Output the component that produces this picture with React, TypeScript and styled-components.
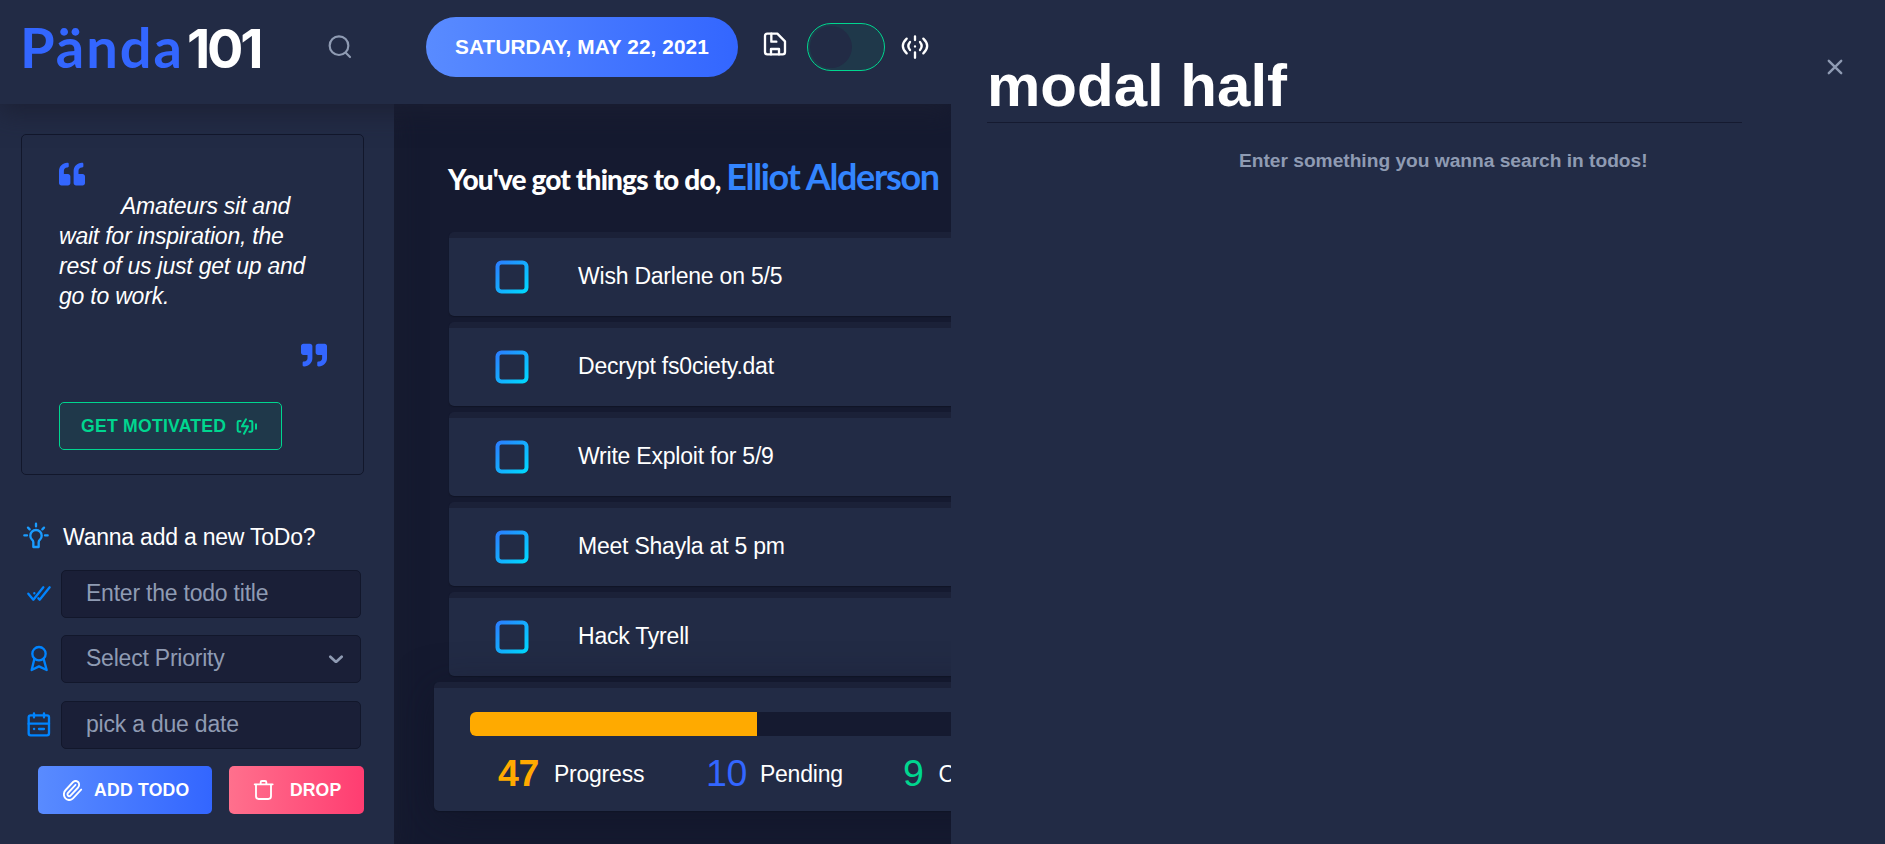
import React from "react";
import styled, { createGlobalStyle } from "styled-components";
import { FaQuoteLeft, FaQuoteRight } from "react-icons/fa";

const c = {
  panel: "#222b45",
  deep: "#151a30",
  field: "#1a1f37",
  line: "#12172b",
  hint: "#8f9bb3",
  primary: "#3366ff",
  primaryLight: "#598bff",
  info: "#0084ff",
  success: "#00d68f",
  warning: "#ffaa00",
};

const Global = createGlobalStyle`
  *, *::before, *::after { box-sizing: border-box; }
  html, body { margin: 0; padding: 0; background: ${c.panel}; overflow: hidden; }
  body {
    font-family: "Liberation Sans", Arial, sans-serif;
    font-size: 23px;
    letter-spacing: -0.22px;
    color: #fff;
  }
  p, h1, h2 { margin: 0; font-weight: 400; }
`;

const Screen = styled.div`
  display: flex;
  width: 1885px;
  height: 844px;
  overflow: hidden;
`;

const Workspace = styled.div`
  display: flex;
  flex-direction: column;
  flex: none;
  width: 951px;
  overflow: hidden;
  background: ${c.deep};
`;

const Header = styled.header`
  position: relative;
  z-index: 2;
  display: flex;
  align-items: flex-start;
  flex: none;
  height: 104px;
  background: ${c.panel};
  box-shadow: 0 8px 24px rgba(27, 31, 49, 0.85);
`;

const Logo = styled.h1`
  display: flex;
  align-items: baseline;
  width: 305px;
  padding: 13px 0 0 20px;
  font-family: Lato, sans-serif;
  font-size: 56px;
  line-height: 67px;
  font-weight: 700;
  letter-spacing: 2px;
  color: ${c.primary};
  white-space: nowrap;
`;

const LogoNumber = styled.span`
  margin-left: 3px;
  color: #fff;
  font-family: Inter, sans-serif;
  font-size: 54px;
  font-weight: 700;
  letter-spacing: -3.2px;
`;

const Svg = styled.svg<{ $color?: string; $stroke?: number }>`
  display: block;
  flex: none;
  fill: none;
  stroke: ${(p) => p.$color ?? "#fff"};
  stroke-width: ${(p) => p.$stroke ?? 7};
  stroke-linecap: round;
  stroke-linejoin: round;
`;

type IconProps = {
  box: [number, number, number, number];
  color?: string;
  stroke?: number;
  children: React.ReactNode;
};

/* Icon paths are drawn on a grid three units to the pixel. */
const Icon = ({ box, color, stroke, children }: IconProps) => (
  <Svg
    width={box[2] / 3}
    height={box[3] / 3}
    viewBox={box.join(" ")}
    $color={color}
    $stroke={stroke}
    aria-hidden
  >
    {children}
  </Svg>
);

const HeaderSlot = styled.span<{ $left: number; $top: number }>`
  margin-left: ${(p) => p.$left}px;
  margin-top: ${(p) => p.$top}px;
`;

const DatePill = styled.div`
  width: 312px;
  height: 60px;
  margin: 17px 0 0 73px;
  border-radius: 30px;
  background: linear-gradient(90deg, ${c.primaryLight}, ${c.primary});
  font-size: 20.8px;
  line-height: 60px;
  font-weight: 700;
  letter-spacing: 0.08px;
  text-align: center;
  white-space: nowrap;
`;

const Toggle = styled.div`
  display: flex;
  align-items: center;
  width: 78px;
  height: 48px;
  margin: 23px 0 0 20px;
  padding-left: 2px;
  border: 1px solid ${c.success};
  border-radius: 24px;
  background: rgba(0, 214, 143, 0.08);
`;

const Knob = styled.span`
  width: 42px;
  height: 42px;
  border-radius: 50%;
  background: ${c.panel};
`;

const Body = styled.div`
  display: flex;
  flex: 1;
  min-height: 0;
`;

const Sidebar = styled.aside`
  position: relative;
  z-index: 1;
  flex: none;
  width: 394px;
  padding: 30px 30px 0 21px;
  background: ${c.panel};
  box-shadow: 0 8px 24px rgba(27, 31, 49, 0.7);
`;

const QuoteCard = styled.section`
  display: flex;
  flex-direction: column;
  align-items: flex-start;
  width: 343px;
  height: 341px;
  padding: 26px 36px 0 37px;
  border: 1px solid ${c.line};
  border-radius: 5px;
`;

const QuoteMark = styled.span<{ $end?: boolean }>`
  display: block;
  height: 26px;
  align-self: ${(p) => (p.$end ? "flex-end" : "flex-start")};
  margin-top: ${(p) => (p.$end ? 31 : 0)}px;
  color: ${c.primary};
  svg {
    display: block;
    width: 26px;
    height: 26px;
  }
`;

const Quote = styled.p`
  width: 262px;
  margin-top: 4px;
  font-style: italic;
  line-height: 30px;
  text-indent: 62px;
`;

const Button = styled.button<{ $kind: "outline" | "primary" | "danger" }>`
  display: flex;
  align-items: center;
  height: 48px;
  padding: 0;
  border: ${(p) => (p.$kind === "outline" ? `1px solid ${c.success}` : "0")};
  border-radius: 5px;
  background: ${(p) =>
    p.$kind === "outline"
      ? "rgba(0, 214, 143, 0.08)"
      : p.$kind === "primary"
        ? `linear-gradient(90deg, ${c.primaryLight}, ${c.primary})`
        : "linear-gradient(90deg, #ff708d, #ff3d71)"};
  color: ${(p) => (p.$kind === "outline" ? c.success : "#fff")};
  font: 700 17.6px/48px "Liberation Sans", Arial, sans-serif;
  letter-spacing: 0.25px;
  white-space: nowrap;
`;

const MotivateButton = styled(Button)`
  width: 223px;
  margin-top: 34px;
  padding-left: 21px;
  gap: 10px;
`;

const AddButton = styled(Button)`
  width: 174px;
  padding-left: 25px;
  gap: 11px;
`;

const DropButton = styled(Button)`
  width: 135px;
  padding-left: 24px;
  gap: 15px;
  letter-spacing: 0.1px;
`;

const Prompt = styled.div`
  display: flex;
  align-items: center;
  gap: 14px;
  height: 30px;
  margin: 45px 0 20px 2px;
  white-space: nowrap;
`;

const PromptText = styled.p`
  line-height: 30px;
  padding-top: 4px;
`;

const FieldRow = styled.div<{ $gap: number }>`
  display: flex;
  align-items: center;
  margin-bottom: ${(p) => p.$gap}px;
`;

const FieldIcon = styled.span`
  display: flex;
  justify-content: center;
  width: 36px;
  margin-right: 4px;
`;

const Field = styled.div`
  display: flex;
  align-items: center;
  justify-content: space-between;
  width: 300px;
  height: 48px;
  padding: 0 16px 2px 24px;
  border: 1px solid ${c.line};
  border-radius: 5px;
  background: ${c.field};
  color: ${c.hint};
`;

const Actions = styled.div`
  display: flex;
  gap: 17px;
  padding-left: 17px;
`;

const Main = styled.main`
  flex: 1;
  min-width: 0;
  overflow: hidden;
  white-space: nowrap;
`;

const Greeting = styled.h2`
  height: 128px;
  padding: 50px 0 0 54px;
  font-family: Lato, sans-serif;
  font-size: 28px;
  line-height: 44px;
  font-weight: 900;
  letter-spacing: -0.84px;
`;

const UserName = styled.span`
  color: #3385ff;
  font-size: 36px;
  font-weight: 700;
  letter-spacing: -1.35px;
`;

const TodoList = styled.ul`
  display: flex;
  flex-direction: column;
  gap: 6px;
  width: 1380px;
  margin: 0;
  padding: 0 0 0 55px;
  list-style: none;
`;

const Surface = styled.div`
  border-top: 6px solid #1b2138;
  border-radius: 5px;
  background: ${c.panel};
  box-shadow: 0 1px 1px #101426;
`;

const TodoCard = styled(Surface).attrs({ as: "li" })`
  display: flex;
  align-items: center;
  gap: 49px;
  height: 84px;
  padding-left: 46px;
`;

const TodoTitle = styled.span`
  padding-bottom: 1px;
`;

const Stats = styled(Surface)`
  position: relative;
  width: 1400px;
  height: 129px;
  margin: 6px 0 0 40px;
  padding: 24px 36px 0;
  box-shadow: 0 1px 1px #101426, 0 8px 40px rgba(16, 20, 38, 0.6);
`;

const Track = styled.div`
  height: 24px;
  border-radius: 6px;
  background: ${c.deep};
  overflow: hidden;
`;

const Fill = styled.div`
  height: 24px;
  background: ${c.warning};
`;

const Counters = styled.div`
  display: flex;
  padding: 11px 0 0 28px;
`;

const Counter = styled.div<{ $width: number; $gap: number }>`
  display: flex;
  flex: none;
  align-items: baseline;
  gap: ${(p) => p.$gap}px;
  width: ${(p) => p.$width}px;
  line-height: 52px;
`;

const CounterLabel = styled.span`
  position: relative;
  top: -4px;
`;

const Count = styled.span<{ $color: string; $bold?: boolean }>`
  color: ${(p) => p.$color};
  font-size: 37.5px;
  letter-spacing: -0.4px;
  font-weight: ${(p) => (p.$bold ? 700 : 400)};
`;

const Modal = styled.section`
  display: flex;
  flex: 1;
  justify-content: space-between;
  padding-left: 36px;
  background: ${c.panel};
  letter-spacing: 0;
`;

const ModalContent = styled.div`
  width: 755px;
`;

const ModalTitle = styled.h1`
  height: 123px;
  padding-top: 51px;
  border-bottom: 1px solid ${c.deep};
  font-size: 60px;
  line-height: 70px;
  font-weight: 700;
`;

const ModalHint = styled.p`
  padding: 26px 0 0 252px;
  color: ${c.hint};
  font-size: 19.2px;
  line-height: 24px;
  font-weight: 700;
  letter-spacing: -0.02px;
`;

const Close = styled.button`
  align-self: flex-start;
  margin: 59px 42px 0 0;
  padding: 0;
  border: 0;
  background: none;
`;

const todos = [
  "Wish Darlene on 5/5",
  "Decrypt fs0ciety.dat",
  "Write Exploit for 5/9",
  "Meet Shayla at 5 pm",
  "Hack Tyrell",
];

const counters = [
  { value: 47, label: "Progress", color: c.warning, bold: true, width: 208, gap: 15 },
  { value: 10, label: "Pending", color: c.primary, width: 197, gap: 13 },
  { value: 9, label: "Completed", color: c.success, width: 240, gap: 15 },
];

const CheckFrame = styled.rect`
  stroke: url(#check);
  stroke-width: 4;
`;

const Checkbox = () => (
  <Svg width="34" height="34" viewBox="0 0 34 34" aria-hidden>
    <defs>
      <linearGradient id="check" x1="0" y1="0" x2="1" y2="1">
        <stop offset="0" stopColor="#2a80ff" />
        <stop offset="1" stopColor="#00d8ff" />
      </linearGradient>
    </defs>
    <CheckFrame x="2.5" y="2.5" width="29" height="29" rx="4" />
  </Svg>
);

export default function App() {
  return (
    <>
      <Global />
      <Screen>
        <Workspace>
          <Header>
            <Logo>
              Pända<LogoNumber>101</LogoNumber>
            </Logo>
            <HeaderSlot $left={23} $top={35}>
              <Icon box={[984, 105, 75, 75]} color={c.hint} stroke={6.5}>
                <circle cx="1017" cy="137" r="28" />
                <path d="M1038 159 L1050 171" />
              </Icon>
            </HeaderSlot>
            <DatePill>SATURDAY, MAY 22, 2021</DatePill>
            <HeaderSlot $left={24} $top={32}>
              <Icon box={[66, 96, 75, 72]} stroke={7}>
                <path d="M82 101 H112 L135 124 V156 Q135 163 128 163 H82 Q75 163 75 156 V108 Q75 101 82 101 Z" />
                <path d="M94 101 V125 H109 M93 163 V147 H117 V163" />
              </Icon>
            </HeaderSlot>
            <Toggle>
              <Knob />
            </Toggle>
            <HeaderSlot $left={16} $top={34}>
              <Icon box={[483, 102, 84, 78]} stroke={7}>
                <path d="M525 109 V120 M525 157 V173 M525 139 V139.2" />
                <path d="M510 126 Q500 138 510 150 M500 116 Q477 138 500 160" />
                <path d="M540 126 Q550 138 540 150 M550 116 Q573 138 550 160" />
              </Icon>
            </HeaderSlot>
          </Header>
          <Body>
            <Sidebar>
              <QuoteCard>
                <QuoteMark>
                  <FaQuoteLeft />
                </QuoteMark>
                <Quote>Amateurs sit and wait for inspiration, the rest of us just get up and go to work.</Quote>
                <QuoteMark $end>
                  <FaQuoteRight />
                </QuoteMark>
                <MotivateButton $kind="outline">
                  GET MOTIVATED
                  <Icon box={[708, 293, 66, 51]} color={c.success} stroke={6}>
                    <path d="M722 302 H717 Q713 302 713 306 V330 Q713 334 717 334 H721" />
                    <path d="M749 302 H753 Q757 302 757 306 V330 Q757 334 753 334 H748" />
                    <path d="M738 297 L726 318 H744 L732 340 M768 312 V325" />
                  </Icon>
                </MotivateButton>
              </QuoteCard>
              <Prompt>
                <Icon box={[69, 605, 78, 81]} color="#1a9cff">
                  <path d="M100 680 V666 Q100 661 96 658 A17 17 0 1 1 120 658 Q116 661 116 666 V680 Z" />
                  <path d="M108 610 V618 M73 645 H81 M135 645 H143 M84 622 L89 627 M132 622 L127 627" />
                </Icon>
                <PromptText>Wanna add a new ToDo?</PromptText>
              </Prompt>
              <FieldRow $gap={17}>
                <FieldIcon>
                  <Icon box={[80, 88, 78, 54]} color={c.info}>
                    <path d="M87 114 L102 132 L132 95 M117 128 L121 132 L151 95 M105 112.5 V113" />
                  </Icon>
                </FieldIcon>
                <Field>Enter the todo title</Field>
              </FieldRow>
              <FieldRow $gap={18}>
                <FieldIcon>
                  <Icon box={[87, 268, 60, 84]} color={c.info}>
                    <circle cx="117" cy="294" r="20" />
                    <path d="M103 310 L95 343 L117 332 L140 343 L131 310" />
                  </Icon>
                </FieldIcon>
                <Field>
                  Select Priority
                  <Icon box={[384, 295, 48, 30]} color={c.hint} stroke={8}>
                    <path d="M391 306 L408 322 L425 306" />
                  </Icon>
                </Field>
              </FieldRow>
              <FieldRow $gap={17}>
                <FieldIcon>
                  <Icon box={[81, 468, 72, 78]} color={c.info}>
                    <rect x="86" y="478" width="61" height="60" rx="6" />
                    <path d="M102 472 V484 M132 472 V484 M86 503 H147 M102 519 H102.5 M117 519 H132" />
                  </Icon>
                </FieldIcon>
                <Field>pick a due date</Field>
              </FieldRow>
              <Actions>
                <AddButton $kind="primary">
                  <Svg width="20" height="21" viewBox="1 1 22.5 22" preserveAspectRatio="none" $stroke={2.1} aria-hidden>
                    <path d="m21.44 11.05-9.19 9.19a6 6 0 0 1-8.49-8.49l8.57-8.57A4 4 0 1 1 18 8.84l-8.59 8.57a2 2 0 0 1-2.83-2.83l8.49-8.48" />
                  </Svg>
                  ADD TODO
                </AddButton>
                <DropButton $kind="danger">
                  <Icon box={[160, 673, 66, 66]} stroke={5.5}>
                    <path d="M165 689 H219 M183 688 V683 Q183 679 187 679 H196 Q200 679 200 683 V688" />
                    <path d="M169 690 V725 Q169 733 177 733 H206 Q214 733 214 725 V690" />
                  </Icon>
                  DROP
                </DropButton>
              </Actions>
            </Sidebar>
            <Main>
              <Greeting>
                You've got things to do, <UserName>Elliot Alderson</UserName>
              </Greeting>
              <TodoList>
                {todos.map((t) => (
                  <TodoCard key={t}>
                    <Checkbox />
                    <TodoTitle>{t}</TodoTitle>
                  </TodoCard>
                ))}
              </TodoList>
              <Stats>
                <Track>
                  <Fill style={{ width: 287 }} />
                </Track>
                <Counters>
                  {counters.map((s) => (
                    <Counter key={s.label} $width={s.width} $gap={s.gap}>
                      <Count $color={s.color} $bold={s.bold}>
                        {s.value}
                      </Count>
                      <CounterLabel>{s.label}</CounterLabel>
                    </Counter>
                  ))}
                </Counters>
              </Stats>
            </Main>
          </Body>
        </Workspace>
        <Modal>
          <ModalContent>
            <ModalTitle>modal half</ModalTitle>
            <ModalHint>Enter something you wanna search in todos!</ModalHint>
          </ModalContent>
          <Close aria-label="Close">
            <Svg width="16" height="16" viewBox="0 0 16 16" $color={c.hint} $stroke={2.4} aria-hidden>
              <path d="M1.8 1.8 L14.2 14.2 M14.2 1.8 L1.8 14.2" />
            </Svg>
          </Close>
        </Modal>
      </Screen>
    </>
  );
}
